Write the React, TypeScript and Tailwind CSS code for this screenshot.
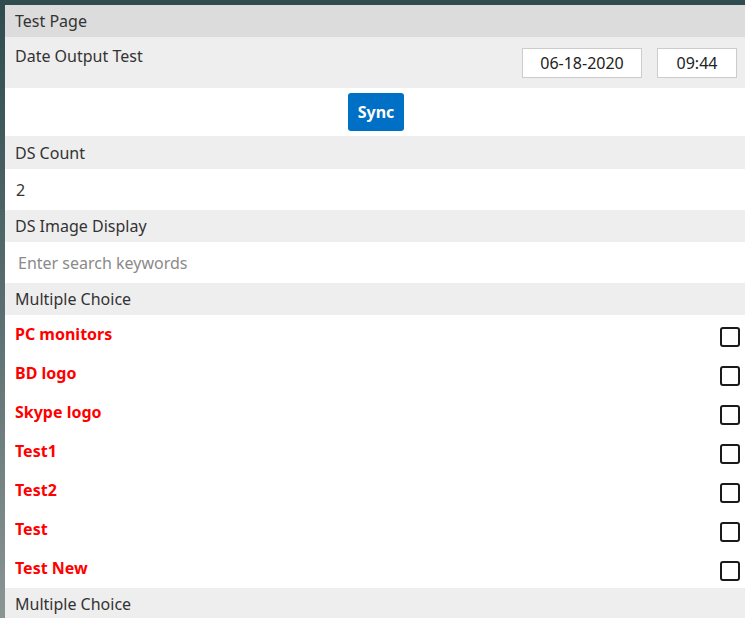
import { useState } from "react";

const items = ["PC monitors", "BD logo", "Skype logo", "Test1", "Test2", "Test", "Test New"];

export default function App() {
  const [checked, setChecked] = useState<boolean[]>(items.map(() => false));

  return (
    <div
      className="flex h-[618px] w-[745px] flex-col overflow-hidden bg-[#304c4f] text-[16px]"
      style={{ fontFamily: '"Noto Sans", "Open Sans", sans-serif' }}
    >
      <div className="h-[5px] shrink-0 bg-[#2f4c4f]" />
      <div className="flex flex-1">
        <div className="w-[5px] shrink-0 bg-gradient-to-b from-[#2f4c4f] via-[#5c6f70] to-[#8b9594]" />
        <div className="flex flex-1 flex-col bg-white">
          <div className="flex h-[32px] shrink-0 items-center bg-[#dcdcdc] px-[10px] text-[#333333]">Test Page</div>

          <div className="flex h-[51px] shrink-0 items-start justify-between bg-[#eeeeee] pl-[10px] pr-[8px]">
            <span className="mt-[7px] text-[#333333]">Date Output Test</span>
            <div className="mt-[11px] flex gap-[15px]">
              <div className="flex h-[30px] w-[120px] items-center justify-center border border-[#cccccc] bg-white text-[#222222]">
                06-18-2020
              </div>
              <div className="flex h-[30px] w-[80px] items-center justify-center border border-[#cccccc] bg-white text-[#222222]">
                09:44
              </div>
            </div>
          </div>

          <div className="flex h-[48px] shrink-0 items-center justify-center">
            <button className="ml-[2px] h-[38px] w-[56px] rounded-[3px] bg-[#0070c6] font-bold text-white">Sync</button>
          </div>

          <div className="flex h-[33px] shrink-0 items-center bg-[#eeeeee] px-[10px] text-[#333333]">DS Count</div>
          <div className="flex h-[41px] shrink-0 items-center px-[11px] text-[#333333]">2</div>

          <div className="flex h-[32px] shrink-0 items-center bg-[#eeeeee] px-[10px] text-[#333333]">DS Image Display</div>
          <div className="flex h-[41px] shrink-0 items-center px-[13px]">
            <input
              className="w-full bg-transparent text-[#333333] outline-none placeholder:text-[#8a8a8a]"
              placeholder="Enter search keywords"
            />
          </div>

          <div className="flex h-[32px] shrink-0 items-center bg-[#eeeeee] px-[10px] text-[#333333]">Multiple Choice</div>
          <div className="flex shrink-0 flex-col">
            {items.map((it, i) => (
              <label key={it} className="flex h-[39px] items-center justify-between pl-[10px] pr-[5px]">
                <span className="-mt-[2px] font-bold text-[#ff0000]">{it}</span>
                <span
                  className="mt-[4px] flex h-[20px] w-[20px] items-center justify-center rounded-[3px] border-2 border-[#1a1a1a]"
                  onClick={() => setChecked(checked.map((c, j) => (j === i ? !c : c)))}
                >
                  {checked[i] && <span className="h-[10px] w-[10px] bg-[#1a1a1a]" />}
                </span>
              </label>
            ))}
          </div>

          <div className="flex h-[32px] shrink-0 items-center bg-[#eeeeee] px-[10px] text-[#333333]">Multiple Choice</div>
        </div>
      </div>
    </div>
  );
}
